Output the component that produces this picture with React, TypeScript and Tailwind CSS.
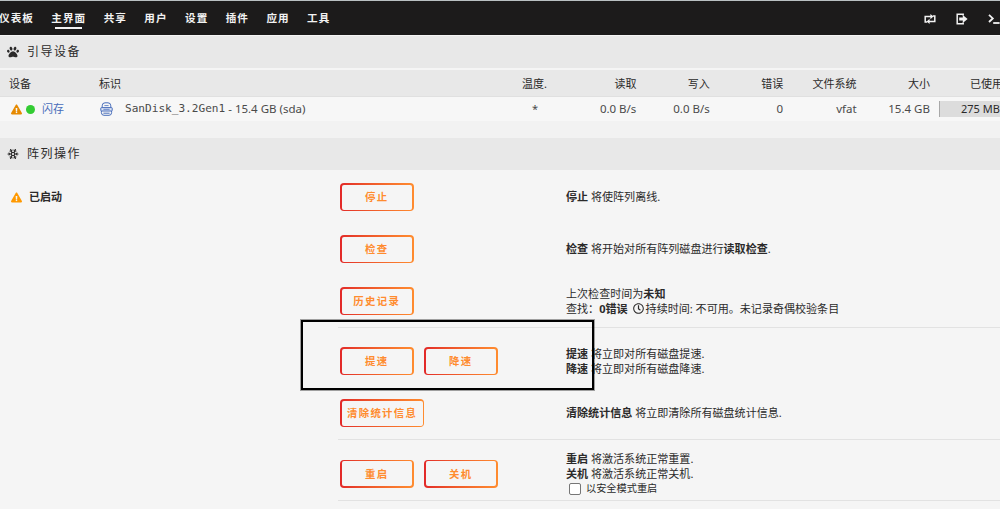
import type { ReactNode } from "react";
import { Snowflake } from "lucide-react";
import { FaExclamationTriangle, FaPaw, FaRegClock } from "react-icons/fa";

const NAV = ["仪表板", "主界面", "共享", "用户", "设置", "插件", "应用", "工具"];

const COLUMNS = [
  { label: "读取", value: "0.0 B/s" },
  { label: "写入", value: "0.0 B/s" },
  { label: "错误", value: "0" },
  { label: "文件系统", value: "vfat" },
  { label: "大小", value: "15.4 GB" },
];

function SwitchIcon() {
  return (
    <svg width="12" height="10" viewBox="0 0 12 10" fill="none" stroke="currentColor" strokeWidth="1.5">
      <path d="M3.2 8H1.2V2.6H7" />
      <path d="M8.8 2H10.8V7.4H5" />
      <path d="M6.4 0L9.4 2.6L6.4 5.2ZM5.6 4.8L2.6 7.4L5.6 10Z" fill="currentColor" stroke="none" />
    </svg>
  );
}

function LogoutIcon() {
  return (
    <svg width="12" height="12" viewBox="0 0 12 12" fill="none" stroke="currentColor" strokeWidth="1.5">
      <path d="M7.2 2.6V1.2H1.2V10.8H7.2V9.4" />
      <path d="M3.2 4.4H6.8V2L11.6 6L6.8 10V7.6H3.2Z" fill="currentColor" stroke="none" />
    </svg>
  );
}

function TerminalIcon() {
  return (
    <svg width="12" height="12" viewBox="0 0 12 12" fill="none" stroke="currentColor" strokeWidth="1.8">
      <path d="M1 1.8L4.8 5.4L1 9" />
      <path d="M5.2 10H11.6" />
    </svg>
  );
}

function DriveIcon() {
  return (
    <svg width="13" height="14" viewBox="0 0 13 14" fill="none" stroke="currentColor">
      <path d="M2.2 5.6V3.8Q2.2 0.8 5 0.8H8Q10.8 0.8 10.8 3.8V5.6" />
      <path d="M4.4 3.6H8.6" strokeWidth="0.8" />
      <rect x="0.8" y="5.6" width="11.4" height="3.4" rx="0.6" fill="#dce4f5" />
      <path d="M3.4 7.3H9.6" strokeWidth="0.8" />
      <path d="M1.4 9V10.6Q1.4 13.3 4 13.3H9Q11.6 13.3 11.6 10.6V9" />
      <path d="M3.4 11.2H9.6" />
    </svg>
  );
}

function SectionTitle({ icon, children }: { icon: ReactNode; children: ReactNode }) {
  return (
    <div className="flex h-8 shrink-0 items-center bg-[#e8e8e8] pl-[7px] text-xs tracking-[1.5px]">
      <span className="flex w-5 text-xs">{icon}</span>
      {children}
    </div>
  );
}

function Button({ children }: { children: ReactNode }) {
  return (
    <button className="h-7 min-w-[73.5px] rounded bg-linear-to-r from-[#e22828] to-[#ff8c2f] p-[1.5px]">
      <span className="flex h-full items-center justify-center rounded-[2px] bg-[#f5f5f5] px-[5.5px] pt-[2px] text-[10.4px] font-bold tracking-[1.3px] text-[#ff8c2f]">
        {children}
      </span>
    </button>
  );
}

function Row({ status, buttons, className, children }: {
  status?: ReactNode;
  buttons: string[];
  className: string;
  children: ReactNode;
}) {
  return (
    <div className="flex">
      <div className="flex w-[338px] shrink-0 items-center pl-[11px]">{status}</div>
      <div className={`flex grow items-center border-[#e2e2e2] pl-[2px] ${className}`}>
        <div className="flex w-[226px] shrink-0 gap-[10.5px]">
          {buttons.map((b) => (
            <Button key={b}>{b}</Button>
          ))}
        </div>
        <div className="text-[11.05px] leading-[15.3px]">{children}</div>
      </div>
    </div>
  );
}

export default function App() {
  return (
    <div className="flex h-[509px] w-[1000px] flex-col overflow-hidden whitespace-nowrap border-t border-[#b9c0c2] bg-[#f5f5f5] font-['Noto_Sans','Noto_Sans_CJK_SC',sans-serif] text-[11px] text-[#2b2a2a]">
      <header className="flex h-[34px] shrink-0 items-center justify-between bg-[#1c1b1b] text-[#f2f2f2]">
        <nav className="-ml-px flex gap-[17.4px] text-[10.6px] font-bold tracking-[1.05px]">
          {NAV.map((item) => (
            <div key={item} className="relative leading-[15px]">
              {item}
              {item === "主界面" && (
                <span className="absolute -bottom-[3px] left-1 h-[2px] w-[27px] bg-[#f2f2f2]" />
              )}
            </div>
          ))}
        </nav>
        <div className="flex items-center gap-5 pt-px">
          <SwitchIcon />
          <LogoutIcon />
          <TerminalIcon />
        </div>
      </header>

      <div className="h-px shrink-0 bg-[#f5f5f5]" />
      <SectionTitle icon={<FaPaw />}>引导设备</SectionTitle>
      <div className="mt-[2px] flex h-[27px] shrink-0 items-center border-b border-[#e0e0e0] bg-[#e8e8e8] pt-[2px]">
        <div className="w-[99px] shrink-0 pl-[9px]">设备</div>
        <div className="w-[398px] shrink-0">标识</div>
        <div className="w-[75px] shrink-0 text-center">温度.</div>
        {COLUMNS.map((c) => (
          <div key={c.label} className="w-[73.4px] shrink-0 pr-[9px] text-right">
            {c.label}
          </div>
        ))}
        <div className="shrink-0 pl-[31px]">已使用</div>
      </div>
      <div className="flex h-6 shrink-0 items-center bg-[#f7f7f7]">
        <div className="flex w-[99px] shrink-0 items-center pl-[11px] text-[#486dba]">
          <FaExclamationTriangle className="text-[11px] text-[#e68a00]" />
          <span className="mr-[7px] ml-1 size-[9px] rounded-full bg-[#33cc33]" />
          闪存
        </div>
        <div className="flex w-[398px] shrink-0 items-center text-[#4a4a4a]">
          <span className="mr-[12px] ml-[1px] text-[#486dba]">
            <DriveIcon />
          </span>
          <span className="font-['DejaVu_Sans_Mono',monospace] text-[11.1px]">SanDisk_3.2Gen1</span>
          <span className="ml-[3px] text-[11.5px]">- 15.4 GB (sda)</span>
        </div>
        <div className="w-[76px] shrink-0 text-center text-[#4a4a4a]">*</div>
        {COLUMNS.map((c, i) => (
          <div
            key={c.label}
            className={`${i === 0 ? "w-[72.4px]" : "w-[73.4px]"} shrink-0 pr-[9px] text-right text-[11.5px] text-[#4a4a4a]`}
          >
            {c.value}
          </div>
        ))}
        <div className="flex h-4 grow items-center border-l border-[#a8a8a8] bg-[#dcdcdc] pl-[21px]">
          275 MB
        </div>
      </div>
      <div className="h-[17px] shrink-0 bg-[#f2f2f2]" />

      <SectionTitle icon={<Snowflake size={12} strokeWidth={2.2} />}>阵列操作</SectionTitle>
      <div className="pt-px">
        <Row
          buttons={["停止"]}
          className="h-[52px]"
          status={
            <>
              <FaExclamationTriangle className="mr-[7px] text-[11px] text-[#ff9900]" />
              <b>已启动</b>
            </>
          }
        >
          <b>停止</b> 将使阵列离线.
        </Row>
        <Row buttons={["检查"]} className="h-[52px]">
          <b>检查</b> 将开始对所有阵列磁盘进行<b>读取检查</b>.
        </Row>
        <Row buttons={["历史记录"]} className="h-[53px] border-b">
          <div>
            上次检查时间为<b>未知</b>
          </div>
          <div className="flex items-center">
            查找：<b>0错误</b>
            <FaRegClock className="mr-[2px] ml-[5px] text-[11px]" />
            持续时间: 不可用。未记录奇偶校验条目
          </div>
        </Row>
        <Row buttons={["提速", "降速"]} className="h-[59px] pt-[7px]">
          <div>
            <b>提速</b> 将立即对所有磁盘提速.
          </div>
          <div>
            <b>降速</b> 将立即对所有磁盘降速.
          </div>
        </Row>
        <Row buttons={["清除统计信息"]} className="h-[53px] border-b">
          <b>清除统计信息</b> 将立即清除所有磁盘统计信息.
        </Row>
        <Row buttons={["重启", "关机"]} className="h-[61px] border-b pt-[7px]">
          <div>
            <b>重启</b> 将激活系统正常重置.
          </div>
          <div>
            <b>关机</b> 将激活系统正常关机.
          </div>
          <label className="flex items-center pl-[3px] text-[10.2px]">
            <input
              type="checkbox"
              className="mr-[5px] size-[12px] appearance-none rounded-[2px] border border-[#767676] bg-white"
            />
            以安全模式重启
          </label>
        </Row>
      </div>

      <div className="absolute top-[320px] left-[301px] h-[70px] w-[293px] border-2 border-black ring-1 ring-black/35" />
    </div>
  );
}
